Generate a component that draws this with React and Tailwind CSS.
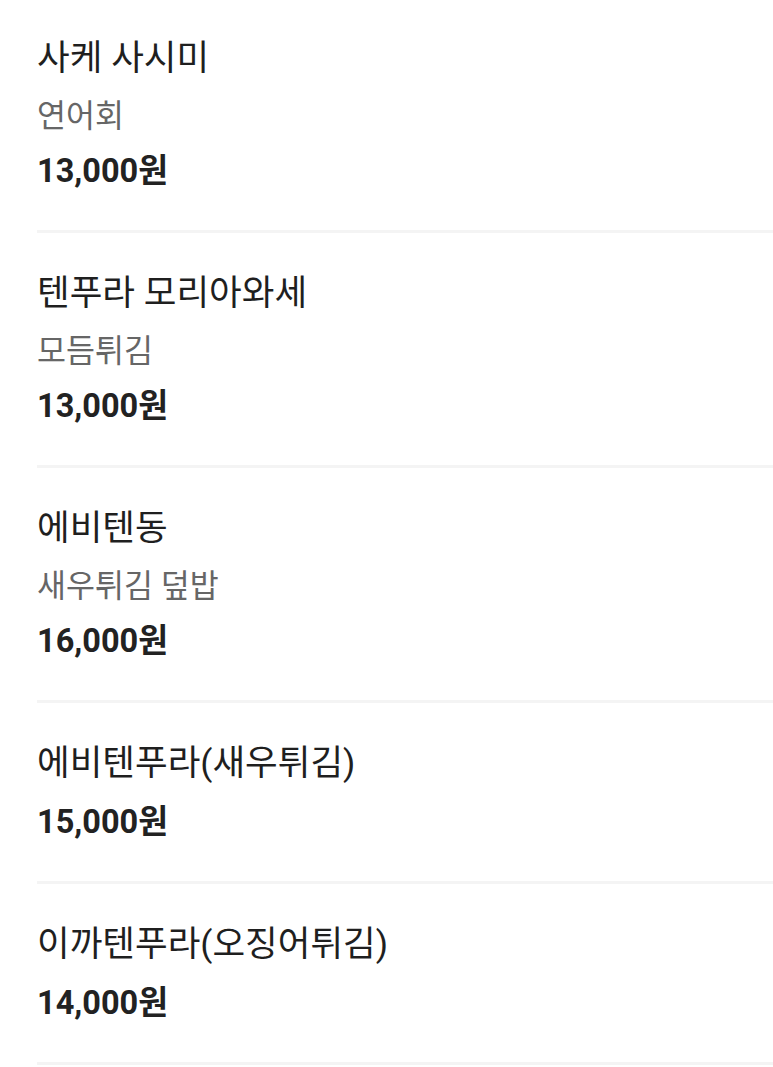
const menu = [
  { name: '사케 사시미', desc: '연어회', price: '13,000원' },
  { name: '텐푸라 모리아와세', desc: '모듬튀김', price: '13,000원' },
  { name: '에비텐동', desc: '새우튀김 덮밥', price: '16,000원' },
  { name: '에비텐푸라(새우튀김)', price: '15,000원' },
  { name: '이까텐푸라(오징어튀김)', price: '14,000원' },
];

export default function App() {
  return (
    <div
      className="min-h-screen bg-white pl-[37px] text-[#222]"
      style={{ fontFamily: 'Roboto, "Noto Sans CJK KR", sans-serif' }}
    >
      <ul>
        {menu.map((item, i) => (
          <li
            key={item.name}
            className={`border-b-[3px] border-[#f4f4f4] pb-[39px] ${i === 0 ? 'pt-[36px]' : 'pt-[38px]'}`}
          >
            <p className="text-[35.5px] leading-[44px] text-[#1f1f1f]">{item.name}</p>
            {item.desc && (
              <p className="mt-[17px] text-[31.5px] leading-[40px] text-[#666]">{item.desc}</p>
            )}
            <p className={`text-[32.5px] font-bold leading-[40px] text-[#222] ${item.desc ? 'mt-[14px]' : 'mt-[17px]'}`}>
              {item.price}
            </p>
          </li>
        ))}
      </ul>
    </div>
  );
}
